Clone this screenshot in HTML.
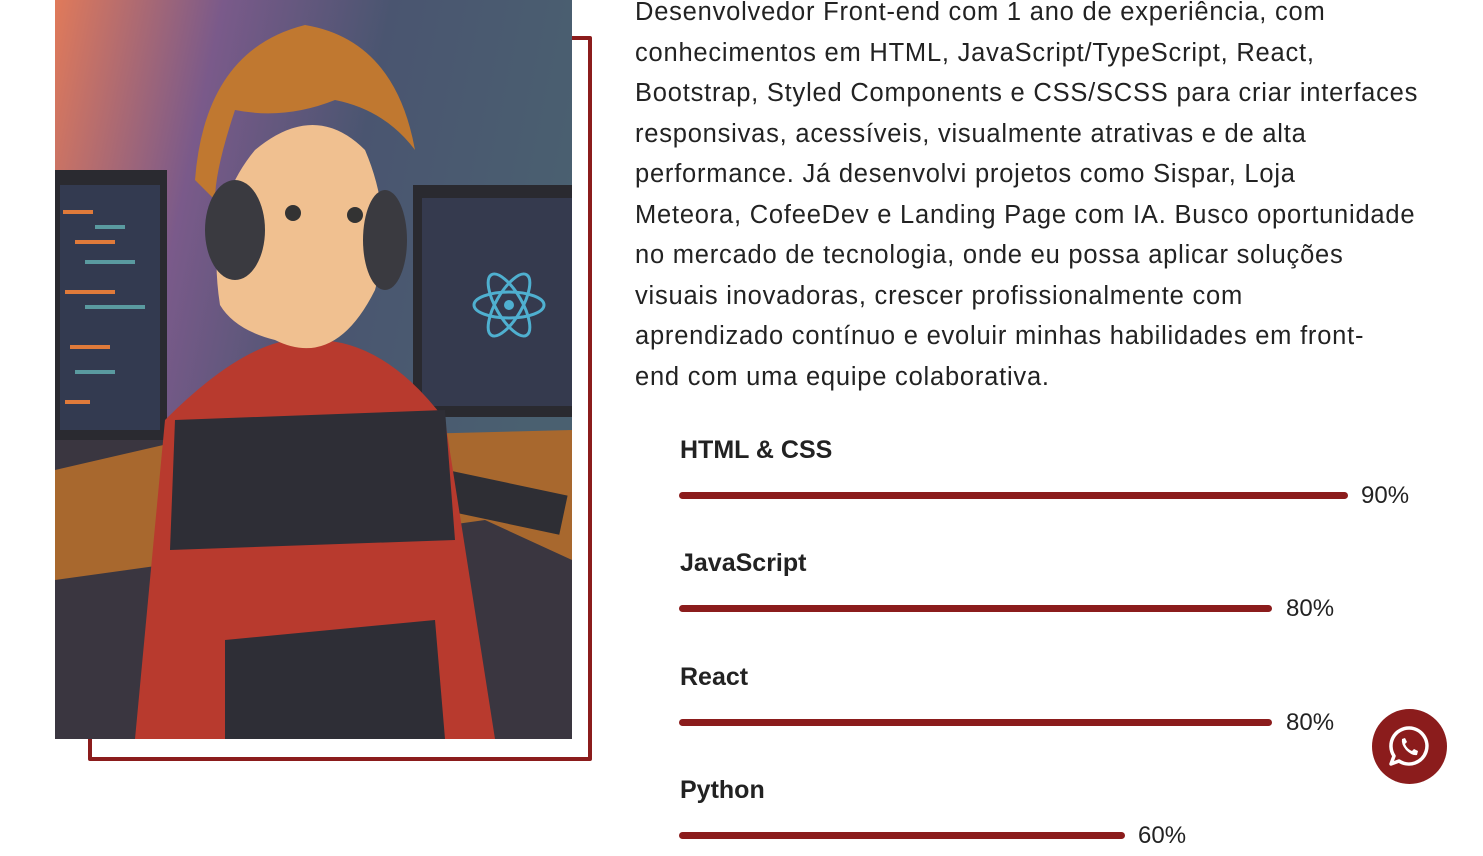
<!DOCTYPE html>
<html><head><meta charset="utf-8"><style>
html,body{margin:0;padding:0;background:#fff;width:1483px;height:856px;overflow:hidden;position:relative;font-family:"Liberation Sans",sans-serif}
.frame{position:absolute;left:88px;top:36px;width:496px;height:717px;border:4px solid #8b1c1c;border-radius:2px}
.pic{position:absolute;left:55px;top:0;width:517px;height:739px;overflow:hidden}
.txt{position:absolute;left:635px;top:-8px;font-size:25.5px;line-height:40.5px;color:#222;letter-spacing:0.78px;white-space:nowrap}
.lbl{position:absolute;left:680px;font-size:25px;font-weight:bold;color:#222}
.bar{position:absolute;left:679px;height:7px;background:#8b1c1c;border-radius:4px}
.pct{position:absolute;font-size:24px;color:#222}
.wa{position:absolute;left:1372px;top:709px;width:75px;height:75px;border-radius:50%;background:#8b1c1c}
</style></head><body>
<div class="frame"></div>
<div class="pic">
<svg width="517" height="739" viewBox="0 0 517 739">
<defs><linearGradient id="bg" x1="0" y1="0" x2="1" y2="0.3"><stop offset="0" stop-color="#e07a5a"/><stop offset="0.3" stop-color="#7a5a8a"/><stop offset="0.6" stop-color="#4a5570"/><stop offset="1" stop-color="#4a6070"/></linearGradient></defs>
<rect width="517" height="739" fill="url(#bg)"/>
<rect x="0" y="440" width="517" height="299" fill="#3a3640"/>
<polygon points="0,470 130,440 517,430 517,560 430,520 0,580" fill="#a8682e"/>
<rect x="0" y="170" width="112" height="270" fill="#2a2a30"/><rect x="5" y="185" width="100" height="245" fill="#333a50"/>
<g fill="#e07a3a"><rect x="8" y="210" width="30" height="4"/><rect x="20" y="240" width="40" height="4"/><rect x="10" y="290" width="50" height="4"/><rect x="15" y="345" width="40" height="4"/><rect x="10" y="400" width="25" height="4"/></g>
<g fill="#5a9aa0"><rect x="40" y="225" width="30" height="4"/><rect x="30" y="260" width="50" height="4"/><rect x="30" y="305" width="60" height="4"/><rect x="20" y="370" width="40" height="4"/></g>
<rect x="358" y="185" width="159" height="232" fill="#2a2a30"/><rect x="367" y="198" width="150" height="208" fill="#353a4e"/>
<g fill="none" stroke="#4fb0d0" stroke-width="3"><ellipse cx="454" cy="305" rx="35" ry="13"/><ellipse cx="454" cy="305" rx="35" ry="13" transform="rotate(60 454 305)"/><ellipse cx="454" cy="305" rx="35" ry="13" transform="rotate(-60 454 305)"/></g><circle cx="454" cy="305" r="5" fill="#4fb0d0"/>
<rect x="365" y="480" width="145" height="40" fill="#2e2e34" transform="rotate(12 437 500)"/>
<path d="M80 739 L110 420 Q200 330 260 340 Q330 340 390 420 L440 739 Z" fill="#b83a2e"/>
<path d="M120 420 L390 410 L400 540 L115 550 Z" fill="#2e2e36"/>
<path d="M170 640 L380 620 L390 739 L170 739 Z" fill="#2e2e36"/>
<path d="M165 305 Q150 210 200 150 Q260 100 310 150 Q340 220 320 290 Q280 370 220 340 Q180 330 165 305Z" fill="#f0c090"/>
<path d="M140 180 Q150 50 250 25 Q340 40 360 150 Q330 110 280 100 Q230 120 180 110 Q160 170 160 200Z" fill="#c07830"/>
<ellipse cx="180" cy="230" rx="30" ry="50" fill="#3a3a40"/><ellipse cx="330" cy="240" rx="22" ry="50" fill="#3a3a40"/>
<circle cx="238" cy="213" r="8" fill="#333"/><circle cx="300" cy="215" r="8" fill="#333"/>
</svg>
</div>
<div class="txt">Desenvolvedor Front-end com 1 ano de experiência, com<br>conhecimentos em HTML, JavaScript/TypeScript, React,<br>Bootstrap, Styled Components e CSS/SCSS para criar interfaces<br>responsivas, acessíveis, visualmente atrativas e de alta<br>performance. Já desenvolvi projetos como Sispar, Loja<br>Meteora, CofeeDev e Landing Page com IA. Busco oportunidade<br>no mercado de tecnologia, onde eu possa aplicar soluções<br>visuais inovadoras, crescer profissionalmente com<br>aprendizado contínuo e evoluir minhas habilidades em front-<br>end com uma equipe colaborativa.</div>

<div class="lbl" style="top:436px">HTML &amp; CSS</div>
<div class="bar" style="top:492px;width:669px"></div><div class="pct" style="left:1361px;top:482px">90%</div>
<div class="lbl" style="top:549px">JavaScript</div>
<div class="bar" style="top:605px;width:593px"></div><div class="pct" style="left:1286px;top:595px">80%</div>
<div class="lbl" style="top:663px">React</div>
<div class="bar" style="top:719px;width:593px"></div><div class="pct" style="left:1286px;top:709px">80%</div>
<div class="lbl" style="top:776px">Python</div>
<div class="bar" style="top:832px;width:446px"></div><div class="pct" style="left:1138px;top:822px">60%</div>

<div class="wa"><svg width="75" height="75" viewBox="0 0 75 75"><path d="M37.5 19 A18 18 0 1 1 27 52 L19 55 L22 47 A18 18 0 0 1 37.5 19Z" fill="none" stroke="#fff" stroke-width="3.5" stroke-linejoin="round"/><path d="M30 30 Q29 35 34 41 Q40 47 45 46 L46 42 L42 40 L40 42 Q35 40 33 35 L35 33 L33 29Z" fill="#fff"/></svg></div>
</body></html>
